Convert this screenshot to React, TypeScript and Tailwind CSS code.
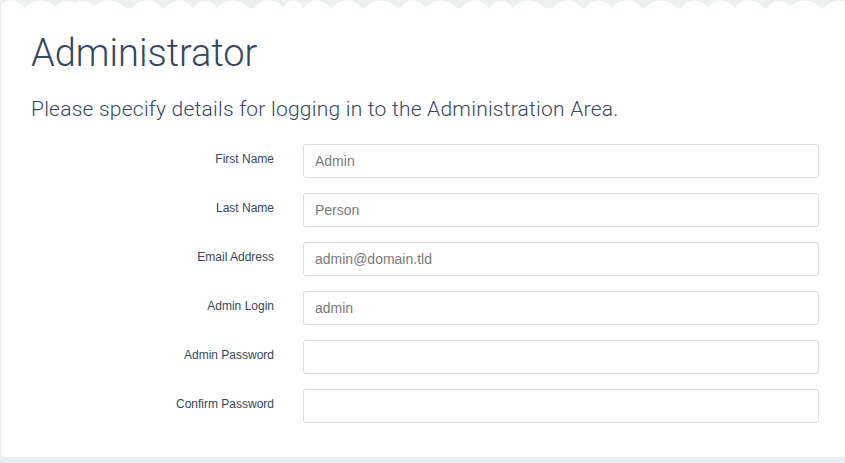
import React from 'react';

const fields = [
  { label: 'First Name', value: 'Admin', type: 'text' },
  { label: 'Last Name', value: 'Person', type: 'text' },
  { label: 'Email Address', value: 'admin@domain.tld', type: 'text' },
  { label: 'Admin Login', value: 'admin', type: 'text' },
  { label: 'Admin Password', value: '', type: 'password' },
  { label: 'Confirm Password', value: '', type: 'password' },
];

// bumps of the cloudy top edge: [centre x, radius]
const bumps: [number, number][] = [
  [10, 16], [40, 20], [66, 12], [82, 12], [108, 22], [146, 18], [178, 16], [204, 12],
  [232, 20], [268, 18], [292, 10], [316, 16], [346, 18], [380, 20], [412, 14], [440, 20],
  [474, 16], [500, 12], [528, 20], [566, 18], [598, 14], [626, 18], [660, 20], [694, 14],
  [720, 16], [748, 18], [778, 12], [804, 20], [838, 18],
];

function CloudEdge() {
  return (
    <svg className="absolute left-0 top-0" width="845" height="14" viewBox="0 0 845 14">
      <rect x="0" y="0" width="845" height="8" fill="#edf0f0" />
      {bumps.map(([cx, r], i) => (
        <circle key={i} cx={cx} cy={r + 0.5} r={r} fill="#ffffff" />
      ))}
    </svg>
  );
}

export default function App() {
  return (
    <div className="h-[463px] w-[845px] overflow-hidden bg-[#eaeeee] pl-px" style={{ fontFamily: '"Liberation Sans", Arial, sans-serif' }}>
      <div className="relative h-[457px] rounded-b bg-white pt-[30px]">
        <CloudEdge />
        <h1 className="ml-[30px] text-[38px] font-light leading-[46px] text-[#34495e] [font-family:Roboto,'Liberation_Sans',sans-serif]">
          Administrator
        </h1>
        <p className="ml-[30px] mt-[21px] text-[21px] font-light leading-[24px] tracking-[0.23px] text-[#34495e] [font-family:Roboto,'Liberation_Sans',sans-serif]">
          Please specify details for logging in to the Administration Area.
        </p>
        <div className="mt-[23px] flex flex-col gap-[15px]">
          {fields.map((f) => (
            <div key={f.label} className="flex items-start">
              <label className="w-[273px] pt-[8px] text-right text-[12px] leading-[14px] text-[#34495e]">
                {f.label}
              </label>
              <input
                type={f.type}
                defaultValue={f.value}
                className="ml-[29px] h-[34px] w-[516px] rounded-[3px] border border-[#dcdcdc] bg-white px-[11px] text-[14px] text-[#7a7a7a] outline-none"
              />
            </div>
          ))}
        </div>
      </div>
    </div>
  );
}
